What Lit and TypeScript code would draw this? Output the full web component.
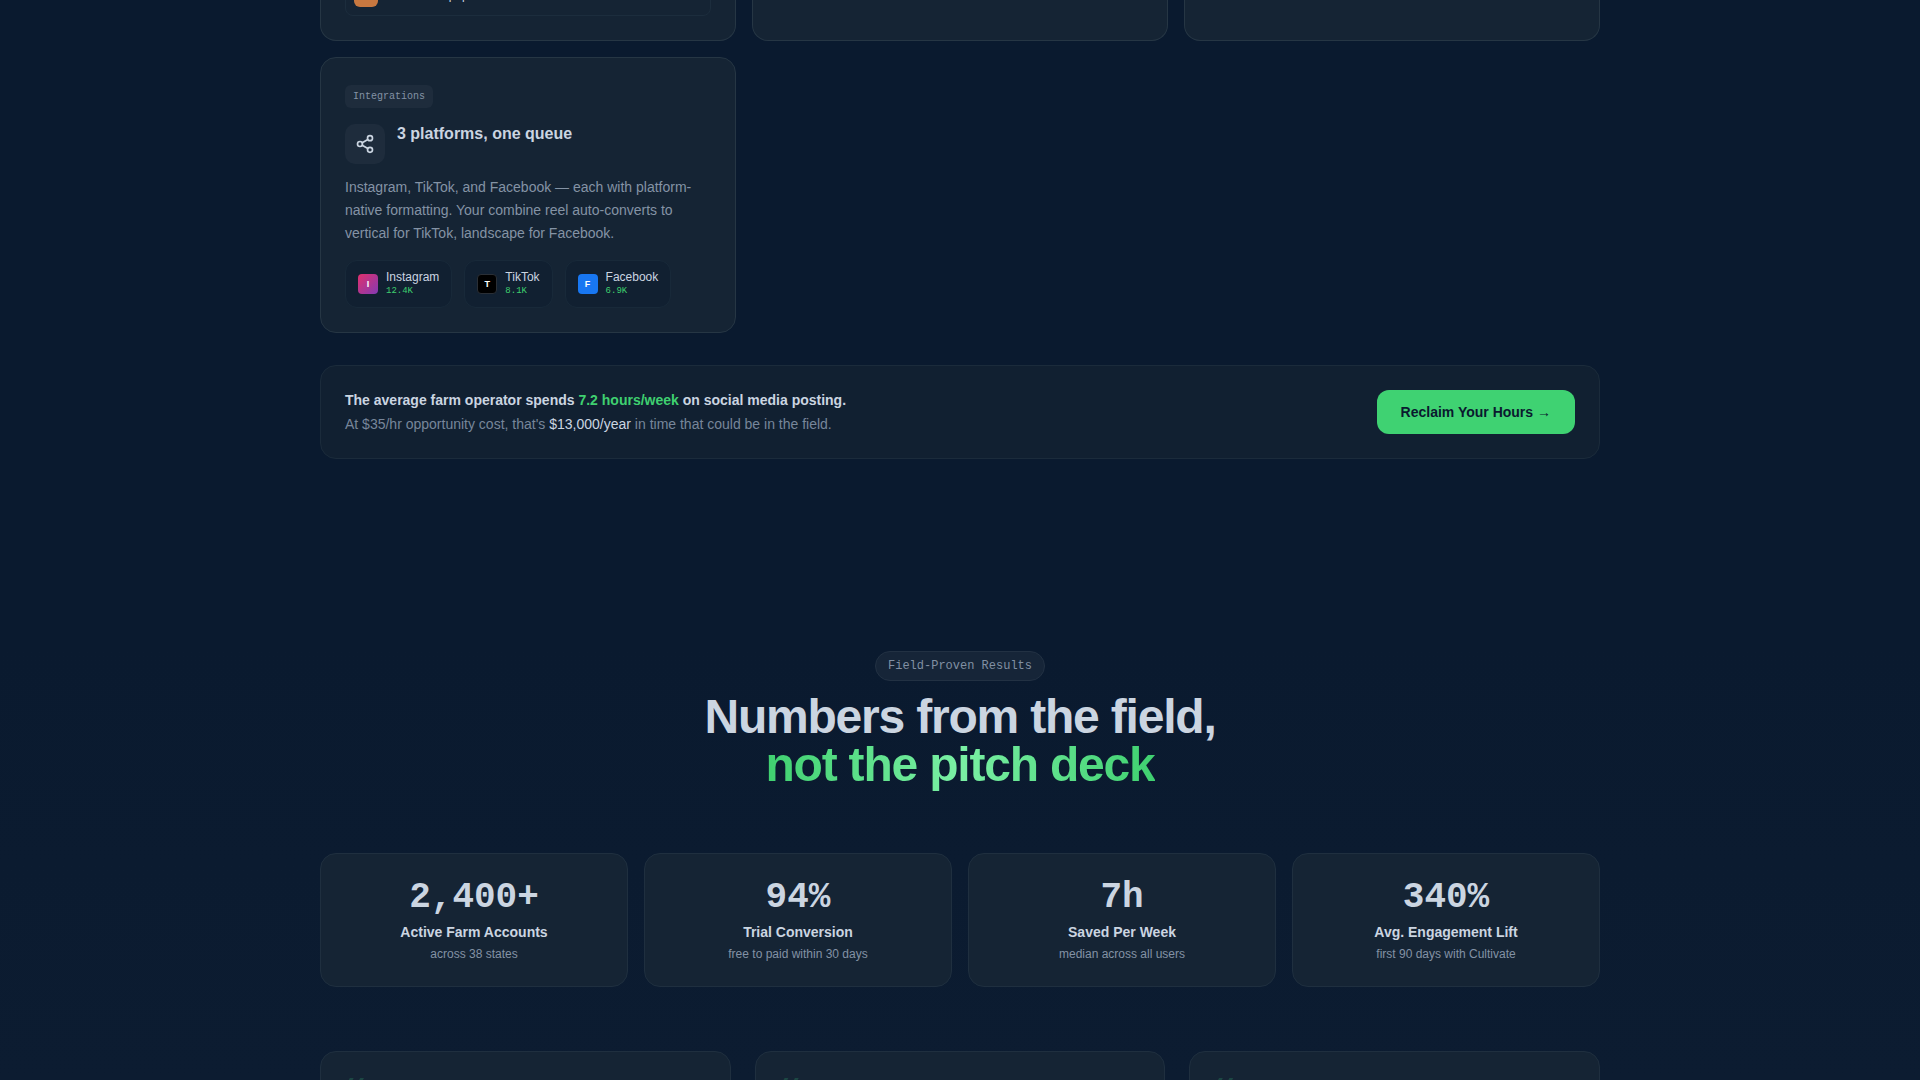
import { LitElement, html, css } from "lit";
import { customElement } from "lit/decorators.js";

interface Platform { name: string; count: string; kind: string }
interface Stat { value: string; label: string; note: string }

const platforms: Platform[] = [
  { name: "Instagram", count: "12.4K", kind: "instagram" },
  { name: "TikTok", count: "8.1K", kind: "tiktok" },
  { name: "Facebook", count: "6.9K", kind: "facebook" },
];

const stats: Stat[] = [
  { value: "2,400+", label: "Active Farm Accounts", note: "across 38 states" },
  { value: "94%", label: "Trial Conversion", note: "free to paid within 30 days" },
  { value: "7h", label: "Saved Per Week", note: "median across all users" },
  { value: "340%", label: "Avg. Engagement Lift", note: "first 90 days with Cultivate" },
];

@customElement("app-root")
export class AppRoot extends LitElement {
  static styles = css`
    :host {
      display: block;
      height: 100vh;
      overflow: hidden;
      background: linear-gradient(180deg, #0a1a2f 0%, #0a1a2f 60%, #0c1c31 100%);
      color: #cbd5e1;
      font-family: "Liberation Sans", Arial, sans-serif;
      font-size: 14px;
      line-height: 20px;
    }
    * { box-sizing: border-box; }
    h2, h3, p { margin: 0; }
    .wrap { max-width: 1328px; margin: 0 auto; padding: 0 24px; }
    .features { display: grid; grid-template-columns: repeat(3, 1fr); gap: 16px; }
    .card {
      background: #152434;
      border: 1px solid #263644;
      border-radius: 16px;
      padding: 24px;
    }
    .tail {
      display: flex;
      flex-direction: column;
      justify-content: flex-end;
      height: 41px;
      border-top: 0;
      border-radius: 0 0 16px 16px;
      padding-top: 0;
    }
    .row {
      display: flex;
      align-items: center;
      gap: 10px;
      flex: none;
      padding: 8px;
      border: 1px solid #1c2d3d;
      border-radius: 8px;
      font-size: 12px;
      line-height: 16px;
    }
    .swatch { width: 24px; height: 24px; flex: none; border-radius: 6px; background: #c87840; }
    .tag {
      display: inline-block;
      padding: 4px 8px;
      border-radius: 6px;
      background: #1e2c3c;
      color: #8392a5;
      font: 10px/15px "Liberation Mono", monospace;
    }
    .integrations { padding-top: 26px; }
    .head { display: flex; gap: 12px; margin: 16px 0 12px; }
    .icon {
      display: grid;
      place-items: center;
      width: 40px;
      height: 40px;
      border-radius: 10px;
      background: #1e2c3c;
    }
    .head h3 { font-size: 16px; line-height: 20px; }
    .text { color: #8493a5; line-height: 23px; }
    .chips { display: flex; gap: 12px; margin-top: 15px; }
    .chip {
      display: flex;
      align-items: center;
      gap: 8px;
      padding: 9px 12px;
      border: 1px solid #182939;
      border-radius: 12px;
      background: #112031;
      font-size: 12px;
      line-height: 14px;
    }
    .logo {
      display: grid;
      place-items: center;
      width: 20px;
      height: 20px;
      border-radius: 4px;
      color: #fff;
      font: bold 9px/12px "Liberation Sans", Arial, sans-serif;
    }
    .instagram { background: linear-gradient(135deg, #e1306c, #833ab4); }
    .tiktok { background: #000; border: 1px solid #2a2f36; }
    .facebook { background: #1877f2; }
    .count { display: block; color: #3ecf6e; font: 9px/14px "Liberation Mono", monospace; }
    .banner {
      display: flex;
      align-items: center;
      justify-content: space-between;
      margin-top: 32px;
      padding: 24px;
      border: 1px solid #1b2b3b;
      border-radius: 16px;
      background: #112031;
    }
    .lead { font-weight: bold; margin-bottom: 4px; }
    .sub { color: #77869a; }
    .green { color: #3fd070; }
    .bright { color: #cbd5e1; }
    .cta {
      padding: 12px 24px;
      border: 0;
      border-radius: 12px;
      background: #3fd272;
      color: #0a1a2f;
      font: bold 14px/20px "Liberation Sans", Arial, sans-serif;
    }
    .intro { display: flex; flex-direction: column; align-items: center; padding-top: 192px; text-align: center; }
    .pill {
      padding: 6px 12px;
      border: 1px solid #223143;
      border-radius: 15px;
      background: #162538;
      color: #8190a3;
      font: 12px/16px "Liberation Mono", monospace;
    }
    .intro h2 { margin-top: 12px; font-size: 48px; line-height: 48px; letter-spacing: -1.2px; }
    .shine {
      display: inline-block;
      padding-bottom: 8px;
      background: linear-gradient(90deg, #3fd070, #7af0a4 50%, #3fd070);
      -webkit-background-clip: text;
      background-clip: text;
      color: transparent;
    }
    .stats { display: grid; grid-template-columns: repeat(4, 1fr); gap: 16px; margin-top: 56px; }
    .stat { border-color: #1f2f3f; text-align: center; }
    .value { margin-bottom: 4px; font: bold 36px/40px "Liberation Mono", monospace; }
    .label { font-weight: bold; margin-bottom: 4px; }
    .note { color: #8392a5; font-size: 12px; line-height: 16px; }
    .quotes { display: grid; grid-template-columns: repeat(3, 1fr); gap: 24px; margin-top: 64px; }
    .quote { border-color: #1f2f3f; height: 200px; }
    .mark { color: #1c4743; font: 64px/50px "Liberation Sans", Arial, sans-serif; }
  `;

  render() {
    return html`
      <main class="wrap">
        <section class="features">
          <article class="card tail">
            <div class="row"><span class="swatch"></span><span>Farmstand paper</span></div>
          </article>
          <article class="card tail"></article>
          <article class="card tail"></article>
          <article class="card integrations">
            <span class="tag">Integrations</span>
            <div class="head">
              <span class="icon">
                <svg width="20" height="20" viewBox="0 0 24 24" fill="none" stroke="currentColor" stroke-width="2" stroke-linecap="round" stroke-linejoin="round" aria-hidden="true">
                  <circle cx="18" cy="5" r="3" /><circle cx="6" cy="12" r="3" /><circle cx="18" cy="19" r="3" />
                  <path d="M8.59 13.51 15.42 17.49M15.41 6.51 8.59 10.49" />
                </svg>
              </span>
              <h3>3 platforms, one queue</h3>
            </div>
            <p class="text">Instagram, TikTok, and Facebook — each with platform-native formatting. Your combine reel auto-converts to vertical for TikTok, landscape for Facebook.</p>
            <div class="chips">
              ${platforms.map((p) => html`
                <div class="chip">
                  <span class="logo ${p.kind}">${p.name[0]}</span>
                  <div>${p.name}<span class="count">${p.count}</span></div>
                </div>`)}
            </div>
          </article>
        </section>

        <section class="banner">
          <div>
            <p class="lead">The average farm operator spends <span class="green">7.2 hours/week</span> on social media posting.</p>
            <p class="sub">At $35/hr opportunity cost, that's <span class="bright">$13,000/year</span> in time that could be in the field.</p>
          </div>
          <button class="cta" type="button">Reclaim Your Hours →</button>
        </section>

        <section class="intro">
          <span class="pill">Field-Proven Results</span>
          <h2>Numbers from the field,<br /><span class="shine">not the pitch deck</span></h2>
        </section>

        <section class="stats">
          ${stats.map((s) => html`
            <div class="card stat">
              <p class="value">${s.value}</p>
              <p class="label">${s.label}</p>
              <p class="note">${s.note}</p>
            </div>`)}
        </section>

        <section class="quotes">
          ${[0, 1, 2].map(() => html`<article class="card quote"><div class="mark">“</div></article>`)}
        </section>
      </main>
    `;
  }
}
